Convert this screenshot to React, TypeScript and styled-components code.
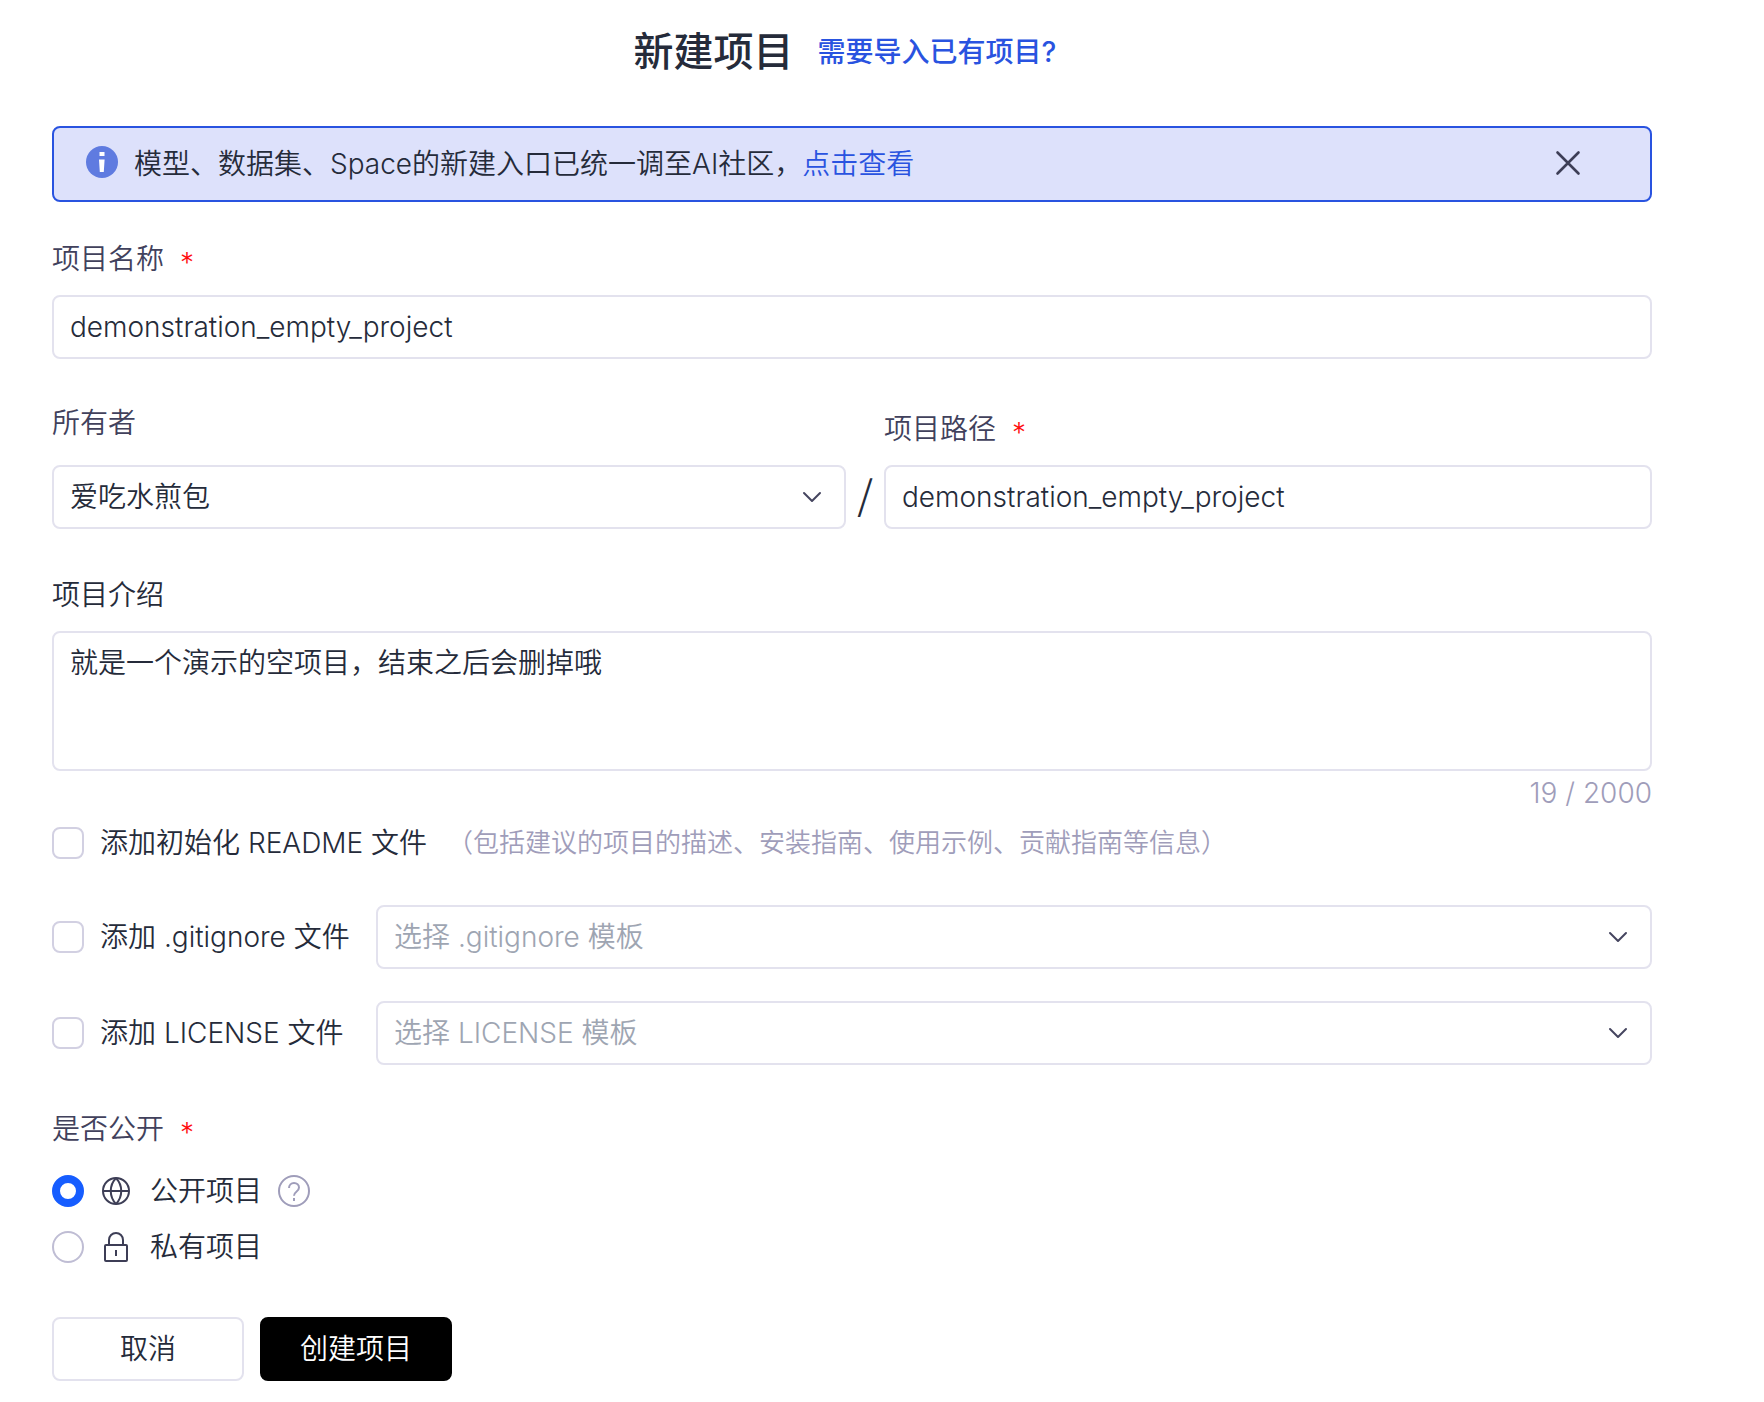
import React, { useState } from "react";
import styled, { createGlobalStyle } from "styled-components";

const ink = "#252b3a";
const label = "#41415c";
const line = "#e3e2ee";
const muted = "#9f9dba";
const brand = "#2953e0";

const GlobalStyle = createGlobalStyle`
  * { box-sizing: border-box; }
  body { margin: 0; background: #fff; }
  body, input, textarea, select, button {
    font-family: Inter, "Noto Sans CJK SC", sans-serif;
    font-size: 28px;
    line-height: 40px;
    font-weight: 350;
    color: ${ink};
  }
`;

const Page = styled.main`
  padding: 24px 112px 20px 52px;
`;

const Header = styled.header`
  display: flex;
  justify-content: center;
  align-items: center;
  gap: 24px;
  padding-right: 14px;
  margin-bottom: 46px;
`;

const Title = styled.h1`
  margin: 0;
  font-size: 40px;
  line-height: 56px;
  font-weight: 500;
`;

const Link = styled.a<{ $strong?: boolean }>`
  color: ${brand};
  text-decoration: none;
  font-weight: ${(p) => (p.$strong ? 500 : 350)};
`;

const Notice = styled.div`
  display: flex;
  align-items: center;
  gap: 16px;
  height: 76px;
  padding: 0 66px 0 32px;
  border: 2px solid ${brand};
  border-radius: 8px;
  background: #dde1fb;

  > svg { margin-bottom: 4px; }
`;

const NoticeText = styled.p`
  flex: 1;
  margin: 0;
`;

const IconButton = styled.button`
  display: flex;
  padding: 0;
  border: 0;
  background: none;
  cursor: pointer;
`;

const Form = styled.form`
  display: flex;
  flex-direction: column;
`;

const Field = styled.div<{ $top?: number; $gap?: number }>`
  display: flex;
  flex-direction: column;
  gap: ${(p) => p.$gap ?? 16}px;
  margin-top: ${(p) => p.$top ?? 0}px;
  min-width: 0;
`;

const LabelLine = styled.div<{ $dark?: boolean }>`
  display: flex;
  align-items: center;
  gap: 16px;
  line-height: 40px;
  color: ${(p) => (p.$dark ? ink : label)};
`;

const Star = styled.span`
  height: 40px;
  line-height: 48px;
  color: #ff0d0d;
`;

const TextInput = styled.input`
  width: 100%;
  height: 64px;
  padding: 0 16px;
  border: 2px solid ${line};
  border-radius: 8px;
  background: #fff;
  outline: none;
`;

const TextArea = styled.textarea`
  display: block;
  width: 100%;
  height: 140px;
  padding: 10px 16px;
  border: 2px solid ${line};
  border-radius: 8px;
  outline: none;
  resize: none;
`;

const Counter = styled.div`
  margin-top: 2px;
  text-align: right;
  color: ${muted};
`;

const SelectBox = styled.div`
  display: grid;
  flex: 1;
  align-items: center;
  min-width: 0;

  > * { grid-area: 1 / 1; }
  > svg {
    justify-self: end;
    margin-right: 24px;
    pointer-events: none;
  }
`;

const SelectInput = styled.select<{ $empty?: boolean }>`
  appearance: none;
  width: 100%;
  height: 64px;
  padding: 0 56px 0 16px;
  border: 2px solid ${line};
  border-radius: 8px;
  background: #fff;
  outline: none;
  color: ${(p) => (p.$empty ? "#9ea5b2" : ink)};
`;

const PathRow = styled.div`
  display: grid;
  grid-template-columns: 794fr 38px 768fr;
  align-items: end;
  margin-top: 44px;
`;

const Slash = styled.span`
  padding-bottom: 4px;
  font-family: "Noto Sans CJK SC", sans-serif;
  font-size: 40px;
  line-height: 64px;
  text-align: center;
`;

const OptionRow = styled.div<{ $top: number }>`
  display: flex;
  align-items: center;
  margin-top: ${(p) => p.$top}px;
`;

const CheckLabel = styled.label<{ $fixed?: boolean }>`
  display: flex;
  align-items: center;
  gap: 16px;
  white-space: nowrap;
  ${(p) => p.$fixed && "width: 324px;"}
`;

const Checkbox = styled.input`
  appearance: none;
  width: 32px;
  height: 32px;
  margin: 0;
  border: 2px solid #d2d0e2;
  border-radius: 8px;
  background: #fff;

  &:checked { border: 8px solid #165dff; }
`;

const Note = styled.span`
  margin-left: 20px;
  font-size: 26px;
  color: ${muted};
`;

const Visibility = styled.fieldset`
  margin: 44px 0 0;
  padding: 0;
  border: 0;
`;

const Legend = styled.legend`
  padding: 0;
`;

const RadioRow = styled.div<{ $top: number }>`
  display: flex;
  align-items: center;
  gap: 16px;
  height: 40px;
  margin-top: ${(p) => p.$top}px;
`;

const RadioLabel = styled.label`
  display: flex;
  align-items: center;
  gap: 16px;

  > svg { margin-right: 2px; }
`;

const Radio = styled.input`
  appearance: none;
  width: 32px;
  height: 32px;
  margin: 0;
  border: 2px solid #bfbdd4;
  border-radius: 50%;
  background: #fff;

  &:checked { border: 8px solid #165dff; }
`;

const Actions = styled.div`
  display: flex;
  gap: 16px;
  margin-top: 50px;
`;

const Button = styled.button<{ $primary?: boolean }>`
  width: 192px;
  height: 64px;
  padding: 0;
  border: 2px solid ${(p) => (p.$primary ? "#000" : line)};
  border-radius: 8px;
  background: ${(p) => (p.$primary ? "#000" : "#fff")};
  color: ${(p) => (p.$primary ? "#fff" : ink)};
  cursor: pointer;
`;

const InfoIcon = () => (
  <svg width="32" height="32" viewBox="0 0 32 32" aria-hidden="true">
    <circle cx="16" cy="16" r="16" fill="#5f7be0" />
    <path d="M13.500 6h5v4h-5zM13 13.500h5.600l-.8 12.500h-4z" fill="#fff" />
  </svg>
);

const CloseIcon = () => (
  <svg width="32" height="32" viewBox="0 0 32 32" fill="none" stroke="#3d3e56" strokeWidth="2.600" strokeLinecap="round" aria-hidden="true">
    <path d="M5.500 4.500l21 21M26.500 4.500l-21 21" />
  </svg>
);

const Chevron = () => (
  <svg width="20" height="12" viewBox="0 0 20 12" fill="none" stroke="#45455f" strokeWidth="2" strokeLinecap="round" strokeLinejoin="round" aria-hidden="true">
    <path d="M2 2l8 8 8-8" />
  </svg>
);

const GlobeIcon = () => (
  <svg width="32" height="32" viewBox="0 0 32 32" fill="none" stroke="#3d3e56" strokeWidth="2" aria-hidden="true">
    <circle cx="16" cy="16" r="13" />
    <path d="M3 16h26M16 3c-7 7.500-7 18.500 0 26M16 3c7 7.500 7 18.500 0 26" />
  </svg>
);

const LockIcon = () => (
  <svg width="32" height="32" viewBox="0 0 32 32" fill="none" stroke="#3d3e56" strokeWidth="2" strokeLinejoin="round" aria-hidden="true">
    <rect x="5" y="14" width="22" height="16" rx="1" />
    <path d="M9 14V9a7 7 0 0 1 14 0v5M16 19v6" />
  </svg>
);

const HelpIcon = () => (
  <svg width="32" height="32" viewBox="0 0 32 32" fill="none" stroke={muted} strokeWidth="2" aria-hidden="true">
    <circle cx="16" cy="16" r="15" />
    <path d="M11 13c0-3 2.200-5 5-5s5 1.900 5 4.500c0 2.200-1.300 3.300-2.600 4.300-1.400 1.100-2.400 2-2.400 4" />
    <path d="M16 23v3" />
  </svg>
);

function Caption({ id, text, required, dark }: { id: string; text: string; required?: boolean; dark?: boolean }) {
  return (
    <LabelLine $dark={dark}>
      <label htmlFor={id}>{text}</label>
      {required && <Star>*</Star>}
    </LabelLine>
  );
}

function TemplateOption({ id, top, text, placeholder }: { id: string; top: number; text: string; placeholder: string }) {
  return (
    <OptionRow $top={top}>
      <CheckLabel $fixed>
        <Checkbox type="checkbox" />
        {text}
      </CheckLabel>
      <SelectBox>
        <SelectInput id={id} aria-label={placeholder} $empty defaultValue="">
          <option value="">{placeholder}</option>
        </SelectInput>
        <Chevron />
      </SelectBox>
    </OptionRow>
  );
}

export default function App() {
  const [name, setName] = useState("demonstration_empty_project");
  const [path, setPath] = useState("demonstration_empty_project");
  const [intro, setIntro] = useState("就是一个演示的空项目，结束之后会删掉哦");

  return (
    <Page lang="zh-CN">
      <GlobalStyle />
      <Header>
        <Title>新建项目</Title>
        <Link href="#import" $strong>需要导入已有项目?</Link>
      </Header>

      <Notice>
        <InfoIcon />
        <NoticeText>
          模型、数据集、Space的新建入口已统一调至AI社区，<Link href="#community">点击查看</Link>
        </NoticeText>
        <IconButton type="button" aria-label="关闭">
          <CloseIcon />
        </IconButton>
      </Notice>

      <Form onSubmit={(e) => e.preventDefault()}>
        <Field $top={37}>
          <Caption id="name" text="项目名称" required />
          <TextInput id="name" value={name} onChange={(e) => setName(e.target.value)} />
        </Field>

        <PathRow>
          <Field $gap={22}>
            <Caption id="owner" text="所有者" />
            <SelectBox>
              <SelectInput id="owner" defaultValue="me">
                <option value="me">爱吃水煎包</option>
              </SelectInput>
              <Chevron />
            </SelectBox>
          </Field>
          <Slash>/</Slash>
          <Field>
            <Caption id="path" text="项目路径" required />
            <TextInput id="path" value={path} onChange={(e) => setPath(e.target.value)} />
          </Field>
        </PathRow>

        <Field $top={46}>
          <Caption id="intro" text="项目介绍" dark />
          <TextArea id="intro" value={intro} onChange={(e) => setIntro(e.target.value)} />
        </Field>
        <Counter>{intro.length} / 2000</Counter>

        <OptionRow $top={10}>
          <CheckLabel>
            <Checkbox type="checkbox" />
            添加初始化 README 文件
          </CheckLabel>
          <Note>（包括建议的项目的描述、安装指南、使用示例、贡献指南等信息）</Note>
        </OptionRow>
        <TemplateOption id="gitignore" top={42} text="添加 .gitignore 文件" placeholder="选择 .gitignore 模板" />
        <TemplateOption id="license" top={32} text="添加 LICENSE 文件" placeholder="选择 LICENSE 模板" />

        <Visibility>
          <Legend>
            <LabelLine>
              是否公开
              <Star>*</Star>
            </LabelLine>
          </Legend>
          <RadioRow $top={22}>
            <RadioLabel>
              <Radio type="radio" name="visibility" defaultChecked />
              <GlobeIcon />
              公开项目
            </RadioLabel>
            <IconButton type="button" aria-label="帮助">
              <HelpIcon />
            </IconButton>
          </RadioRow>
          <RadioRow $top={16}>
            <RadioLabel>
              <Radio type="radio" name="visibility" />
              <LockIcon />
              私有项目
            </RadioLabel>
          </RadioRow>
        </Visibility>

        <Actions>
          <Button type="button">取消</Button>
          <Button type="submit" $primary>创建项目</Button>
        </Actions>
      </Form>
    </Page>
  );
}
